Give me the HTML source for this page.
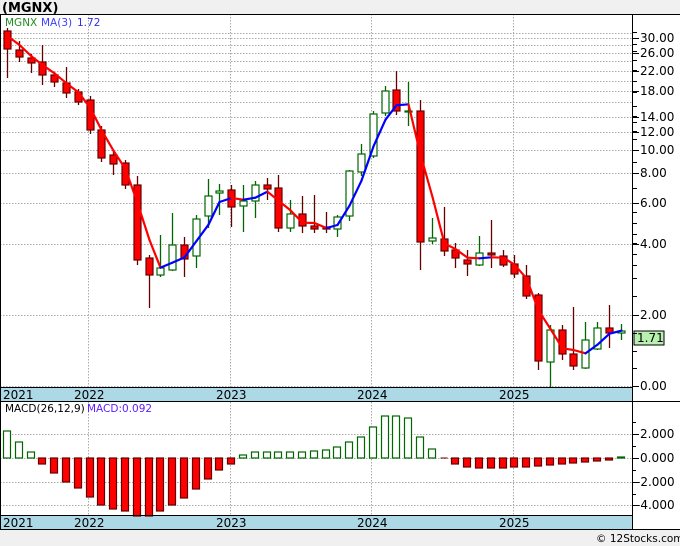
<!DOCTYPE html>
<html><head><meta charset="utf-8"><style>
body{margin:0;background:#f0f0f0;width:680px;height:546px;overflow:hidden;font-family:"DejaVu Sans","Liberation Sans",sans-serif}
svg{position:absolute;left:0;top:0}
</style></head><body>
<svg id="s" width="680" height="546" xmlns="http://www.w3.org/2000/svg" font-family="DejaVu Sans, Liberation Sans, sans-serif">
<rect x="0" y="0" width="680" height="546" fill="#f0f0f0"/>
<rect x="0" y="14" width="680" height="516" fill="#fff"/>
<text x="2" y="12" font-size="13" font-weight="bold" fill="#000">(MGNX)</text>
<g id="grid" stroke="#aaa" stroke-dasharray="1.5,1.5" stroke-width="1"></g>
<rect x="0" y="388" width="632" height="13" fill="#add8e6"/>
<rect x="0" y="516" width="632" height="13" fill="#add8e6"/>
<g id="chart"></g>
<line x1="0" y1="14.5" x2="680" y2="14.5" stroke="#000"/>
<line x1="0" y1="387.5" x2="632" y2="387.5" stroke="#000"/>
<line x1="0" y1="401.5" x2="680" y2="401.5" stroke="#000"/>
<line x1="0" y1="515.5" x2="632" y2="515.5" stroke="#000"/>
<line x1="0" y1="529.5" x2="680" y2="529.5" stroke="#000"/>
<line x1="632.5" y1="14" x2="632.5" y2="530" stroke="#000"/>
<line x1="0.5" y1="14" x2="0.5" y2="530" stroke="#000"/>
<g font-size="12" fill="#000">
<text x="3" y="399">2021</text><text x="74" y="399">2022</text><text x="216" y="399">2023</text><text x="357" y="399">2024</text><text x="499" y="399">2025</text>
<text x="3" y="527">2021</text><text x="74" y="527">2022</text><text x="216" y="527">2023</text><text x="357" y="527">2024</text><text x="499" y="527">2025</text>
</g>
<g font-size="10.5"><text x="5" y="26" fill="#228b22">MGNX</text><text x="41" y="26" fill="#4040ff">MA(3)</text><text x="77" y="26" fill="#3030e0">1.72</text>
<text x="5" y="412" fill="#000">MACD(26,12,9)</text><text x="87" y="412" fill="#6020ff">MACD:0.092</text></g>
<rect x="634" y="331" width="30" height="14" fill="#b8f0b0" stroke="#000" stroke-width="1"/>
<text x="637" y="342" font-size="12" fill="#000">1.71</text>
<text x="596" y="542" font-size="10.5" fill="#000">© 12Stocks.com</text>
</svg>
<script>
const S=document.getElementById('chart'),G=document.getElementById('grid'),NS='http://www.w3.org/2000/svg';
function el(p,t,a){const e=document.createElementNS(NS,t);for(const k in a)e.setAttribute(k,a[k]);p.appendChild(e);return e;}
const svg=document.getElementById('s');
[33,38,45,53,61,71,81,91,102,117,132,150,173,203,244,315,386].forEach(y=>el(G,'line',{x1:0,x2:632,y1:y+.5,y2:y+.5}));
[434,458,482,505].forEach(y=>el(G,'line',{x1:0,x2:632,y1:y+.5,y2:y+.5}));
[88,230,371,513].forEach(x=>{el(G,'line',{x1:x+.5,x2:x+.5,y1:14,y2:388});el(G,'line',{x1:x+.5,x2:x+.5,y1:402,y2:516});});
const lab=[[38,'30.00'],[53,'26.00'],[71,'22.00'],[91,'18.00'],[117,'14.00'],[132,'12.00'],[150,'10.00'],[173,'8.00'],[203,'6.00'],[244,'4.00'],[315,'2.00'],[386,'0.00']];
[32,38,44,51,60,70,81,92,106,116,122,131,139,150,162,173,188,203,212,223,234,243,254,265,278,296,315,333,351,368,386].forEach(y=>el(svg,'line',{x1:632,x2:637,y1:y+.5,y2:y+.5,stroke:'#000'}));
lab.forEach(([y,t])=>{el(svg,'line',{x1:632,x2:639,y1:y+.5,y2:y+.5,stroke:'#000'});const e=el(svg,'text',{x:640,y:y+4,'font-size':12,fill:'#000'});e.textContent=t;});
[[434,'2.000'],[458,'0.000'],[482,'-2.000'],[505,'-4.000']].forEach(([y,t])=>{el(svg,'line',{x1:632,x2:639,y1:y+.5,y2:y+.5,stroke:'#000'});const e=el(svg,'text',{x:y>470?636:640,y:y+4,'font-size':12,fill:'#000'});e.textContent=t;});
[422,446,470,494].forEach(y=>el(svg,'line',{x1:632,x2:636,y1:y+.5,y2:y+.5,stroke:'#000'}));
const C=[['r',31,49,28,78],['r',50,57,41,62],['r',58,63,54,73],['r',62,75,45,85],['r',75,82,72,87],['r',83,93,67,98],['r',92,102,89,105],['r',100,130,96,134],['r',130,158,126,162],['r',155,164,150,175],['r',163,185,160,189],['r',185,260,176,265],['r',258,275,255,308],
['g',268,275,235,277],['g',245,270,213,271],['r',245,259,237,277],['g',219,256,215,268],['g',196,216,179,228],['g',191,193,184,215],['r',190,207,185,227],['g',201,206,185,232],['g',185,201,181,218],['r',185,189,178,200],['r',188,228,175,232],['g',214,228,200,232],['r',214,226,196,233],['r',226,229,195,233],['r',227,229,212,233],['g',217,229,215,237],
['g',171,216,170,221],['g',154,172,144,176],['g',114,156,111,158],['g',91,113,86,116],['r',90,111,71,115],['g',111,112,82,126],['r',111,242,100,270],['g',238,241,218,244],['r',239,251,207,256],['r',250,258,243,268],['r',260,264,250,276],['g',253,265,236,266],['r',253,255,220,268],['r',256,265,250,267],['r',264,274,255,278],['r',276,296,265,299],['r',295,361,293,370],['g',330,362,325,387],['r',330,354,325,360],['r',354,366,307,370],['g',340,368,322,369],['g',328,349,322,350],['r',328,333,305,348],['g',331,333,324,340]];
const X=i=>Math.round(7+11.8*i);
const closes=C.map(c=>c[0]=='r'?c[2]:c[1]);
C.forEach((c,i)=>{const x=X(i)+.5,col=c[0]=='r'?'#600':'#060';
el(S,'line',{x1:x,x2:x,y1:c[3],y2:c[4],stroke:col,'stroke-width':1.3});
el(S,'rect',{x:x-3.5,y:c[1],width:7,height:Math.max(1,c[2]-c[1]),fill:c[0]=='r'?'#f00':'#fff',stroke:c[0]=='r'?'#600':'#060','stroke-width':1.2});});
const ma=closes.map((c,i)=>i<2?c:(closes[i]+closes[i-1]+closes[i-2])/3);ma[0]=36;ma[1]=45;
for(let i=1;i<ma.length;i++){el(S,'line',{x1:X(i-1)+.5,y1:ma[i-1],x2:X(i)+.5,y2:ma[i],stroke:ma[i]<ma[i-1]?'#00f':'#f00','stroke-width':2.2,'stroke-linecap':'round'});}
const M=[431,442,452,464,473,482,488,497,505,509,511,516,516,511,505,498,489,479,470,464,455,452,452,452,452,452,451,450,447,442,437,427,416,416,418,437,449,458,464,467,468,468,468,467,467,466,465,464,463,462,461,460,457];
M.forEach((y,i)=>{const x=X(i)-3.5;if(y<458)el(S,'rect',{x:x,y:y,width:7,height:458-y,fill:'#fff',stroke:'#060','stroke-width':1.2});else if(y>458)el(S,'rect',{x:x,y:458,width:7,height:y-458,fill:'#f00',stroke:'#600','stroke-width':1.2});else el(S,'line',{x1:x,x2:x+7,y1:458,y2:458,stroke:'#600'});});
</script>
</body></html>
